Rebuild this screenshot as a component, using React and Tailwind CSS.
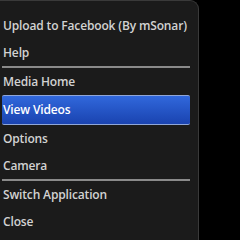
import React from "react";

const Item = ({ label, active }) => (
  <div
    className={
      active
        ? "mr-2 flex h-[30px] items-center whitespace-nowrap rounded-[2px] border-y border-[#8fa6d8] bg-gradient-to-b from-[#3168dc] to-[#1a43b0] pl-[1px] text-white"
        : "flex h-[27px] items-center whitespace-nowrap pl-[1px] text-[#d2d2d2]"
    }
  >
    {label}
  </div>
);

const Divider = () => <div className="mr-2 h-[2px] bg-[#8a8a8a]" />;

export default function App() {
  return (
    <div className="flex h-[240px] w-[240px] overflow-hidden bg-black font-['Open_Sans',sans-serif] text-[12px] font-semibold tracking-[-0.15px]">
      <div className="w-[199px] rounded-tr-[9px] border-r border-t border-[#3a3a3a] bg-[#1b1b1b] pl-[2px] pt-[11px]">
        <Item label="Upload to Facebook (By mSonar)" />
        <Item label="Help" />
        <Divider />
        <Item label="Media Home" />
        <Item label="View Videos" active />
        <Item label="Options" />
        <Item label="Camera" />
        <Divider />
        <Item label="Switch Application" />
        <Item label="Close" />
      </div>
    </div>
  );
}
